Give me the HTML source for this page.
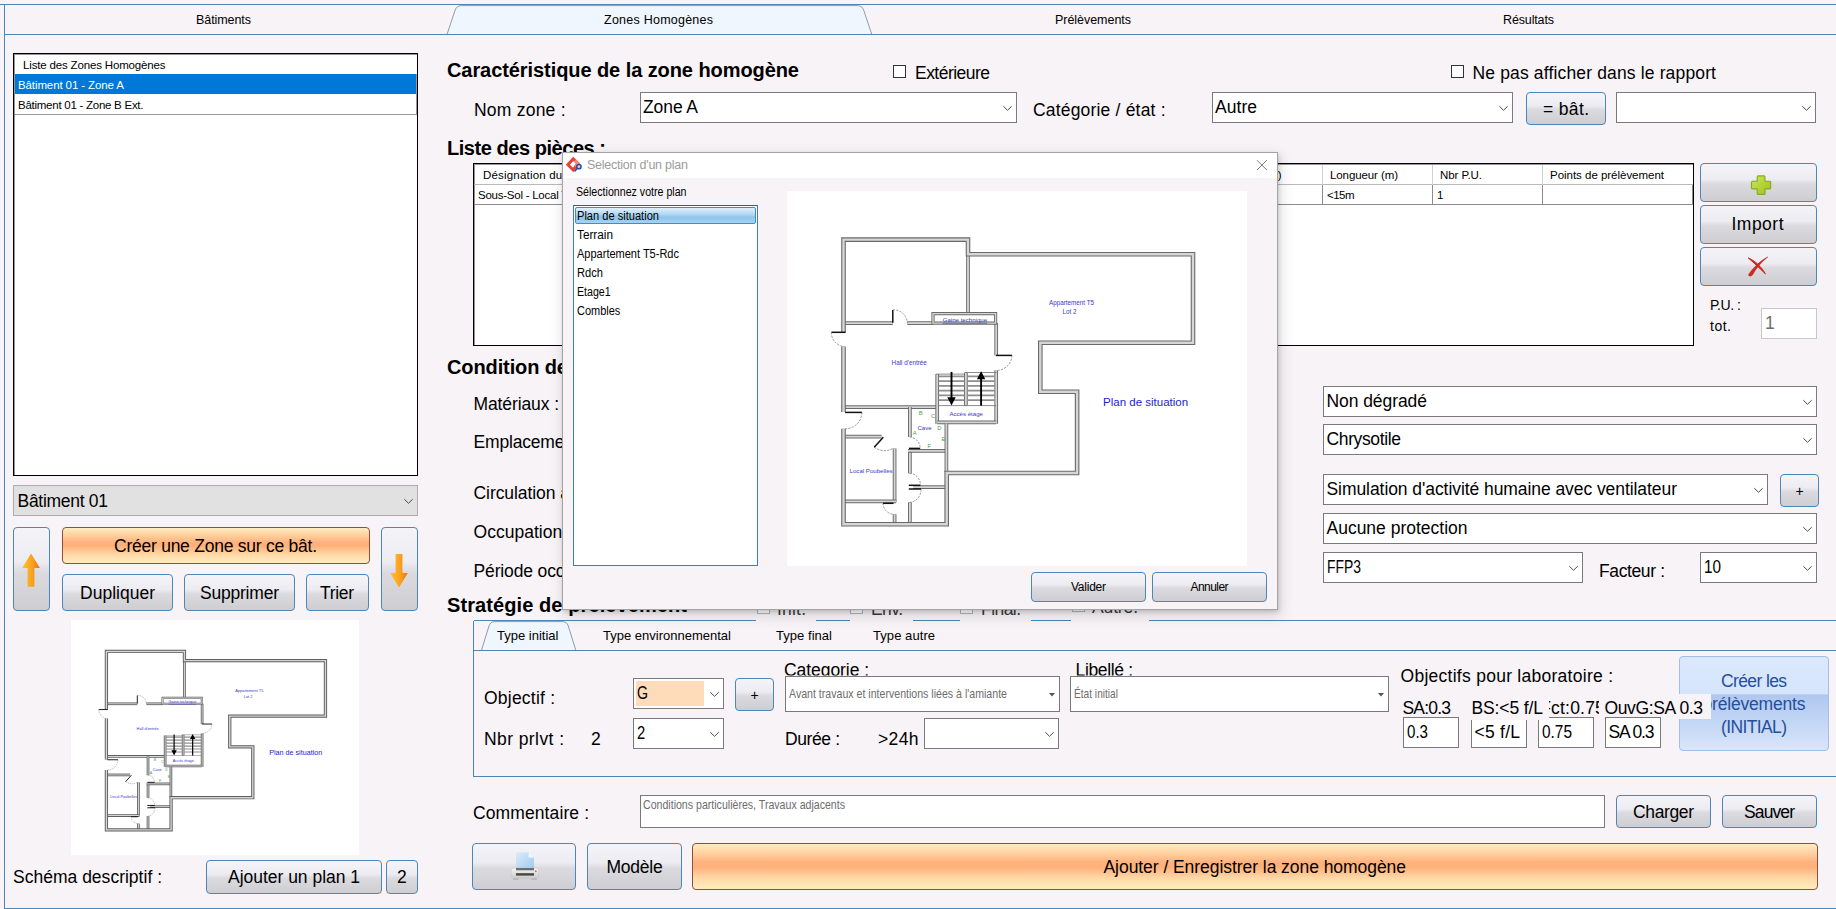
<!DOCTYPE html>
<html lang="fr"><head><meta charset="utf-8"><title>Zones Homogènes</title>
<style>
html,body{margin:0;padding:0}
body{width:1836px;height:909px;overflow:hidden;position:relative;background:#f7f3f7;font-family:"Liberation Sans",sans-serif;color:#000}
div,span,svg.abs{position:absolute;box-sizing:border-box}
.t{white-space:pre;display:block}
svg text{font-family:"Liberation Sans",sans-serif}
.btn{border:1px solid #4d86b8;border-radius:4px;background:linear-gradient(#f4f3f8 0%,#edecf2 41%,#dbdadf 54%,#cecdd2 100%)}
.obtn{border:1px solid #8a5238;border-radius:4px;background:linear-gradient(#ffecc4 0%,#ffd2a0 19%,#ffb27e 41%,#ffb07a 51%,#ffd8a6 76%,#ffedc0 100%)}
.combo{border:1px solid #7a7a7a;background:#fff}
.chev{position:absolute;right:3px;top:50%;margin-top:-3px}
.line{background:#4a86b8}
.cb{border:1px solid #333;background:#fff}
</style></head><body>

<div class="line" style="left:0px;top:4px;width:1836px;height:1px;"></div>
<div class="line" style="left:4px;top:4px;width:1px;height:905px;"></div>
<div class="line" style="left:4px;top:908px;width:1832px;height:1px;"></div>
<svg class="abs" style="left:440px;top:0" width="440" height="36" viewBox="440 0 440 36"><path d="M447 34.5 L455 10.5 Q456.6 5.6 461.5 5.6 H857.3 Q862.2 5.6 863.8 10.5 L871.8 34.5 Z" fill="#eff6fd" stroke="#74849a" stroke-width=".8"/></svg>
<div class="line" style="left:4px;top:34px;width:1832px;height:1px;"></div>
<span class="t" style="left:196.0px;top:13px;font-size:12.5px;line-height:14px;letter-spacing:-0.073px;">Bâtiments</span>
<span class="t" style="left:604.0px;top:13px;font-size:12.5px;line-height:14px;letter-spacing:0.242px;">Zones Homogènes</span>
<span class="t" style="left:1055.0px;top:13px;font-size:12.5px;line-height:14px;letter-spacing:-0.039px;">Prélèvements</span>
<span class="t" style="left:1503.0px;top:13px;font-size:12.5px;line-height:14px;letter-spacing:-0.138px;">Résultats</span>
<div class="" style="left:13px;top:53px;width:405px;height:423px;border:1px solid #000;background:#fff;box-shadow:inset 1px 1px 0 rgba(0,0,0,.42)"></div>
<div class="" style="left:15px;top:74px;width:401px;height:20px;background:#0078d7"></div>
<div class="" style="left:15px;top:114px;width:402px;height:1px;background:#999"></div>
<div class="" style="left:416px;top:74px;width:1px;height:41px;background:#999"></div>
<span class="t" style="left:23.0px;top:59px;font-size:11.5px;line-height:12px;letter-spacing:-0.162px;">Liste des Zones Homogènes</span>
<span class="t" style="left:18.0px;top:79px;font-size:11.5px;line-height:12px;letter-spacing:-0.107px;color:#fff;">Bâtiment 01 - Zone A</span>
<span class="t" style="left:18.0px;top:99px;font-size:11.5px;line-height:12px;letter-spacing:-0.257px;">Bâtiment 01 - Zone B Ext.</span>
<div class="combo" style="left:13px;top:485px;width:405px;height:31px;background:#e1e1e1;border-color:#adadad"><svg class="chev" width="11" height="7" viewBox="0 0 11 7"><path d="M1.3 1.2 L5.5 5.3 L9.7 1.2" fill="none" stroke="#4a4a4a" stroke-width="1"/></svg></div>
<span class="t" style="left:17.5px;top:491px;font-size:17.5px;line-height:20px;letter-spacing:-0.289px;">Bâtiment 01</span>
<div class="btn" style="left:13px;top:527px;width:37px;height:84px;"></div>
<div class="btn" style="left:381px;top:527px;width:37px;height:84px;"></div>
<svg class="abs" style="left:19.5px;top:551px" width="22" height="38" viewBox="0 0 22 38"><defs><linearGradient id="ag1" x1="0" y1="0" x2="1" y2="0"><stop offset="0" stop-color="#ffc32c"/><stop offset=".62" stop-color="#f99d1c"/><stop offset="1" stop-color="#ea6a1a"/></linearGradient></defs><path d="M11 2.6 L19.8 17 H14.4 V35.8 H7.6 V17 H2.2 Z" fill="url(#ag1)"/></svg>
<svg class="abs" style="left:387.6px;top:551px" width="22" height="38" viewBox="0 0 22 38"><defs><linearGradient id="ag2" x1="0" y1="0" x2="1" y2="0"><stop offset="0" stop-color="#ffc32c"/><stop offset=".62" stop-color="#f99d1c"/><stop offset="1" stop-color="#ea6a1a"/></linearGradient></defs><path d="M11 36.4 L19.8 22 H14.4 V3 H7.6 V22 H2.2 Z" fill="url(#ag2)"/></svg>
<div class="obtn" style="left:62px;top:527px;width:308px;height:37px;"></div>
<span class="t" style="left:114.0px;top:536px;font-size:17.5px;line-height:20px;letter-spacing:-0.246px;">Créer une Zone sur ce bât.</span>
<div class="btn" style="left:62px;top:574px;width:111px;height:37px;"></div>
<span class="t" style="left:80.0px;top:583px;font-size:17.5px;line-height:20px;letter-spacing:0.011px;">Dupliquer</span>
<div class="btn" style="left:184px;top:574px;width:111px;height:37px;"></div>
<span class="t" style="left:200.0px;top:583px;font-size:17.5px;line-height:20px;letter-spacing:-0.216px;">Supprimer</span>
<div class="btn" style="left:306px;top:574px;width:63px;height:37px;"></div>
<span class="t" style="left:320.0px;top:583px;font-size:17.5px;line-height:20px;letter-spacing:-0.330px;">Trier</span>
<div style="left:71px;top:620px;width:287.7px;height:234.5px;overflow:hidden;background:#fff">
<svg class="abs" style="left:0.15px;top:0.9px;background:#fff" width="288.3" height="234.6" viewBox="0 0 460 374" preserveAspectRatio="xMinYMin meet"><rect x="0" y="0" width="460" height="374" fill="#fff"/><path d="M181 48.6 V122" fill="none" stroke="#5e5e5e" stroke-width="4.3" stroke-linejoin="miter"/><path d="M181 48.6 V122" fill="none" stroke="#d6d6d6" stroke-width="1.6" stroke-linejoin="miter"/><path d="M56.5 132.1 H105.8" fill="none" stroke="#5e5e5e" stroke-width="4.3" stroke-linejoin="miter"/><path d="M56.5 132.1 H105.8" fill="none" stroke="#d6d6d6" stroke-width="1.6" stroke-linejoin="miter"/><path d="M120.3 132.1 H146" fill="none" stroke="#5e5e5e" stroke-width="4.3" stroke-linejoin="miter"/><path d="M120.3 132.1 H146" fill="none" stroke="#d6d6d6" stroke-width="1.6" stroke-linejoin="miter"/><path d="M209.2 132 V164.4" fill="none" stroke="#5e5e5e" stroke-width="4.3" stroke-linejoin="miter"/><path d="M209.2 132 V164.4" fill="none" stroke="#d6d6d6" stroke-width="1.6" stroke-linejoin="miter"/><path d="M209.2 179.4 V232.8" fill="none" stroke="#5e5e5e" stroke-width="4.3" stroke-linejoin="miter"/><path d="M209.2 179.4 V232.8" fill="none" stroke="#d6d6d6" stroke-width="1.6" stroke-linejoin="miter"/><path d="M56.5 216.1 H150.5" fill="none" stroke="#5e5e5e" stroke-width="4.3" stroke-linejoin="miter"/><path d="M56.5 216.1 H150.5" fill="none" stroke="#d6d6d6" stroke-width="1.6" stroke-linejoin="miter"/><path d="M150.2 183 V232.8" fill="none" stroke="#5e5e5e" stroke-width="4.3" stroke-linejoin="miter"/><path d="M150.2 183 V232.8" fill="none" stroke="#d6d6d6" stroke-width="1.6" stroke-linejoin="miter"/><path d="M150.2 231.4 H209.2" fill="none" stroke="#5e5e5e" stroke-width="4.3" stroke-linejoin="miter"/><path d="M150.2 231.4 H209.2" fill="none" stroke="#d6d6d6" stroke-width="1.6" stroke-linejoin="miter"/><path d="M178.9 181.5 V214.6" fill="none" stroke="#5e5e5e" stroke-width="4.3" stroke-linejoin="miter"/><path d="M178.9 181.5 V214.6" fill="none" stroke="#d6d6d6" stroke-width="1.6" stroke-linejoin="miter"/><path d="M122.9 216 V246" fill="none" stroke="#5e5e5e" stroke-width="4.3" stroke-linejoin="miter"/><path d="M122.9 216 V246" fill="none" stroke="#d6d6d6" stroke-width="1.6" stroke-linejoin="miter"/><path d="M122.9 258.5 V282.3" fill="none" stroke="#5e5e5e" stroke-width="4.3" stroke-linejoin="miter"/><path d="M122.9 258.5 V282.3" fill="none" stroke="#d6d6d6" stroke-width="1.6" stroke-linejoin="miter"/><path d="M122.9 311.4 V333" fill="none" stroke="#5e5e5e" stroke-width="4.3" stroke-linejoin="miter"/><path d="M122.9 311.4 V333" fill="none" stroke="#d6d6d6" stroke-width="1.6" stroke-linejoin="miter"/><path d="M121 259.9 H159.5" fill="none" stroke="#5e5e5e" stroke-width="4.3" stroke-linejoin="miter"/><path d="M121 259.9 H159.5" fill="none" stroke="#d6d6d6" stroke-width="1.6" stroke-linejoin="miter"/><path d="M126 296.2 H159.5" fill="none" stroke="#5e5e5e" stroke-width="4.3" stroke-linejoin="miter"/><path d="M126 296.2 H159.5" fill="none" stroke="#d6d6d6" stroke-width="1.6" stroke-linejoin="miter"/><path d="M159.4 232.5 V281" fill="none" stroke="#5e5e5e" stroke-width="4.3" stroke-linejoin="miter"/><path d="M159.4 232.5 V281" fill="none" stroke="#d6d6d6" stroke-width="1.6" stroke-linejoin="miter"/><path d="M56.5 245.6 H94.5" fill="none" stroke="#5e5e5e" stroke-width="4.3" stroke-linejoin="miter"/><path d="M56.5 245.6 H94.5" fill="none" stroke="#d6d6d6" stroke-width="1.6" stroke-linejoin="miter"/><path d="M107.6 257.5 V311 " fill="none" stroke="#5e5e5e" stroke-width="4.3" stroke-linejoin="miter"/><path d="M107.6 257.5 V311 " fill="none" stroke="#d6d6d6" stroke-width="1.6" stroke-linejoin="miter"/><path d="M56.5 310.4 H109.2" fill="none" stroke="#5e5e5e" stroke-width="4.3" stroke-linejoin="miter"/><path d="M56.5 310.4 H109.2" fill="none" stroke="#d6d6d6" stroke-width="1.6" stroke-linejoin="miter"/><path d="M107.6 323.2 V333" fill="none" stroke="#5e5e5e" stroke-width="4.3" stroke-linejoin="miter"/><path d="M107.6 323.2 V333" fill="none" stroke="#d6d6d6" stroke-width="1.6" stroke-linejoin="miter"/><path d="M146 122.6 H208.6 V132.1 H146 Z" fill="none" stroke="#5e5e5e" stroke-width="3.2" stroke-linejoin="miter"/><path d="M146 122.6 H208.6 V132.1 H146 Z" fill="none" stroke="#d6d6d6" stroke-width="1.4" stroke-linejoin="miter"/><path d="M151.8 185.30 H177.4 M180.4 185.30 H208" stroke="#8e8e8e" stroke-width="1.7"/><path d="M151.8 190.07 H177.4 M180.4 190.07 H208" stroke="#8e8e8e" stroke-width="1.7"/><path d="M151.8 194.84 H177.4 M180.4 194.84 H208" stroke="#8e8e8e" stroke-width="1.7"/><path d="M151.8 199.61 H177.4 M180.4 199.61 H208" stroke="#8e8e8e" stroke-width="1.7"/><path d="M151.8 204.38 H177.4 M180.4 204.38 H208" stroke="#8e8e8e" stroke-width="1.7"/><path d="M151.8 209.15 H177.4 M180.4 209.15 H208" stroke="#8e8e8e" stroke-width="1.7"/><path d="M149 183.1 H178 M178 181.5 H209.6 M151 214.6 H209" stroke="#6e6e6e" stroke-width=".8" fill="none"/><path d="M56.5 141.3 V48.6 H181 V63.3 H406 V151.8 H253.3 V200.8 H290.1 V282 H159.7 V333.3 H56.5 V237.8 M56.5 221.1 V155.4" fill="none" stroke="#5e5e5e" stroke-width="5.2" stroke-linejoin="miter"/><path d="M56.5 141.3 V48.6 H181 V63.3 H406 V151.8 H253.3 V200.8 H290.1 V282 H159.7 V333.3 H56.5 V237.8 M56.5 221.1 V155.4" fill="none" stroke="#d6d6d6" stroke-width="2.2" stroke-linejoin="miter"/><path d="M44.4 141.3 H58.6" stroke="#111" stroke-width="1.5" fill="none"/><path d="M58.1 221.4 H74.9" stroke="#111" stroke-width="1.5" fill="none"/><path d="M105.8 118.9 V131.7" stroke="#111" stroke-width="1.5" fill="none"/><path d="M209 164.4 H225" stroke="#111" stroke-width="1.5" fill="none"/><path d="M122 257.4 H133.2" stroke="#111" stroke-width="1.5" fill="none"/><path d="M121.8 294.3 H133.4" stroke="#111" stroke-width="1.5" fill="none"/><path d="M121.8 298 H134" stroke="#111" stroke-width="1.5" fill="none"/><path d="M96.3 246.2 L87.2 256.3" stroke="#111" stroke-width="1.5" fill="none"/><path d="M96 312.3 H106.5" stroke="#111" stroke-width="1.5" fill="none"/><path d="M44.4 141.3 A14 14 0 0 0 56 155.4" stroke="#555" stroke-width="0.6" stroke-dasharray="2.2 1.2" fill="none"/><path d="M74.9 221.4 A16.6 16.6 0 0 1 58.1 237.8" stroke="#555" stroke-width="0.6" stroke-dasharray="2.2 1.2" fill="none"/><path d="M105.8 118.9 A13.5 13.5 0 0 1 120.3 131.7" stroke="#555" stroke-width="0.6" stroke-dasharray="2.2 1.2" fill="none"/><path d="M225 164.4 A15.5 15.5 0 0 1 209.5 179.4" stroke="#555" stroke-width="0.6" stroke-dasharray="2.2 1.2" fill="none"/><path d="M122.6 246 A11.3 11.3 0 0 1 133.2 257.2" stroke="#555" stroke-width="0.6" stroke-dasharray="2.2 1.2" fill="none"/><path d="M122.6 282.3 A11.4 11.4 0 0 1 133.4 293.8" stroke="#555" stroke-width="0.6" stroke-dasharray="2.2 1.2" fill="none"/><path d="M134 298.4 A12.6 12.6 0 0 1 122.6 311.4" stroke="#555" stroke-width="0.6" stroke-dasharray="2.2 1.2" fill="none"/><path d="M87.2 256.3 Q96.9 262.5 106.5 257.2" stroke="#555" stroke-width="0.6" stroke-dasharray="2.2 1.2" fill="none"/><path d="M96 312.3 A11 11 0 0 0 106.5 323.2" stroke="#555" stroke-width="0.6" stroke-dasharray="2.2 1.2" fill="none"/><path d="M164.5 180.9 V208" stroke="#000" stroke-width="1.9"/><path d="M160.3 206.2 H168.7 L164.5 214.6 Z" fill="#000"/><path d="M194.1 214.6 V187" stroke="#000" stroke-width="1.9"/><path d="M189.9 188.2 H198.3 L194.1 180.3 Z" fill="#000"/><text x="284.5" y="113.6" font-size="6.3" fill="#3a3ac8" text-anchor="middle" >Appartement T5</text><text x="282.6" y="122.8" font-size="6.3" fill="#3a3ac8" text-anchor="middle" >Lot 2</text><text x="177.9" y="130.9" font-size="6.1" fill="#3a3ac8" text-anchor="middle" text-decoration="underline">Gaine technique</text><text x="122.2" y="173.6" font-size="6.3" fill="#3a3ac8" text-anchor="middle" >Hall d'entrée</text><text x="179.2" y="225.3" font-size="6.1" fill="#3a3ac8" text-anchor="middle" >Accès étage</text><text x="137.6" y="239.3" font-size="6.1" fill="#3a3ac8" text-anchor="middle" >Cave</text><text x="84.1" y="282.1" font-size="6.1" fill="#3a3ac8" text-anchor="middle" >Local Poubelles</text><text x="358.6" y="214.6" font-size="11.5" fill="#2323d2" text-anchor="middle" >Plan de situation</text><text x="133.8" y="223.8" font-size="5.8" fill="#4aa34a" text-anchor="middle" >B</text><text x="146.1" y="226.7" font-size="5.8" fill="#4aa34a" text-anchor="middle" >C</text><text x="152.3" y="238.8" font-size="5.8" fill="#4aa34a" text-anchor="middle" >D</text><text x="156.4" y="249.8" font-size="5.8" fill="#4aa34a" text-anchor="middle" >E</text><text x="127.7" y="243.8" font-size="5.8" fill="#4aa34a" text-anchor="middle" >A</text><text x="142.2" y="257.1" font-size="5.8" fill="#4aa34a" text-anchor="middle" >F</text></svg>
</div>
<span class="t" style="left:13.0px;top:867px;font-size:17.5px;line-height:20px;letter-spacing:0.010px;">Schéma descriptif :</span>
<div class="btn" style="left:206px;top:860px;width:176px;height:34px;"></div>
<span class="t" style="left:228.0px;top:867px;font-size:17.5px;line-height:20px;letter-spacing:-0.020px;">Ajouter un plan 1</span>
<div class="btn" style="left:386px;top:860px;width:32px;height:34px;"></div>
<span class="t" style="left:397.1px;top:867px;font-size:17.5px;line-height:20px;">2</span>
<span class="t" style="left:447.0px;top:59px;font-size:20px;line-height:22px;letter-spacing:-0.075px;font-weight:700;">Caractéristique de la zone homogène</span>
<div class="cb" style="left:893px;top:65px;width:13px;height:13px;"></div>
<span class="t" style="left:915.0px;top:63px;font-size:17.5px;line-height:20px;letter-spacing:-0.529px;">Extérieure</span>
<div class="cb" style="left:1451px;top:65px;width:13px;height:13px;"></div>
<span class="t" style="left:1472.5px;top:63px;font-size:17.5px;line-height:20px;letter-spacing:0.150px;">Ne pas afficher dans le rapport</span>
<span class="t" style="left:474.0px;top:100px;font-size:17.5px;line-height:20px;letter-spacing:0.224px;">Nom zone :</span>
<div class="combo" style="left:640px;top:92px;width:377px;height:31px;"><svg class="chev" width="11" height="7" viewBox="0 0 11 7"><path d="M1.3 1.2 L5.5 5.3 L9.7 1.2" fill="none" stroke="#4a4a4a" stroke-width="1"/></svg></div>
<span class="t" style="left:643.0px;top:97px;font-size:17.5px;line-height:20px;letter-spacing:-0.092px;">Zone A</span>
<span class="t" style="left:1033.0px;top:100px;font-size:17.5px;line-height:20px;letter-spacing:0.184px;">Catégorie / état :</span>
<div class="combo" style="left:1212px;top:92px;width:301px;height:31px;"><svg class="chev" width="11" height="7" viewBox="0 0 11 7"><path d="M1.3 1.2 L5.5 5.3 L9.7 1.2" fill="none" stroke="#4a4a4a" stroke-width="1"/></svg></div>
<span class="t" style="left:1215.0px;top:97px;font-size:17.5px;line-height:20px;letter-spacing:0.043px;">Autre</span>
<div class="btn" style="left:1526px;top:92px;width:80px;height:33px;"></div>
<span class="t" style="left:1543.0px;top:99px;font-size:17.5px;line-height:20px;letter-spacing:0.346px;">= bât.</span>
<div class="combo" style="left:1616px;top:92px;width:200px;height:31px;"><svg class="chev" width="11" height="7" viewBox="0 0 11 7"><path d="M1.3 1.2 L5.5 5.3 L9.7 1.2" fill="none" stroke="#4a4a4a" stroke-width="1"/></svg></div>
<span class="t" style="left:447.0px;top:137px;font-size:20px;line-height:22px;letter-spacing:-0.455px;font-weight:700;">Liste des pièces :</span>
<div class="" style="left:473px;top:163px;width:1221px;height:183px;border:1px solid #000;background:#fff;box-shadow:inset 1px 1px 0 rgba(0,0,0,.42)"></div>
<div class="" style="left:474px;top:184px;width:1219px;height:1px;background:#b9b9b9"></div>
<div class="" style="left:474px;top:204px;width:1219px;height:1px;background:#8c8c8c"></div>
<div class="" style="left:1322px;top:165px;width:1px;height:20px;background:#d0d0d0"></div>
<div class="" style="left:1322px;top:185px;width:1px;height:20px;background:#8c8c8c"></div>
<div class="" style="left:1432px;top:165px;width:1px;height:20px;background:#d0d0d0"></div>
<div class="" style="left:1432px;top:185px;width:1px;height:20px;background:#8c8c8c"></div>
<div class="" style="left:1542px;top:165px;width:1px;height:20px;background:#d0d0d0"></div>
<div class="" style="left:1542px;top:185px;width:1px;height:20px;background:#8c8c8c"></div>
<div class="" style="left:1692px;top:185px;width:1px;height:20px;background:#8c8c8c"></div>
<span class="t" style="left:483.0px;top:169px;font-size:11.5px;line-height:12px;letter-spacing:0.191px;">Désignation du local</span>
<span class="t" style="left:478.0px;top:189px;font-size:11.5px;line-height:12px;letter-spacing:-0.245px;">Sous-Sol - Local Technique</span>
<span class="t" style="left:1226.0px;top:169px;font-size:11.5px;line-height:12px;letter-spacing:-0.457px;">Largeur (m)</span>
<span class="t" style="left:1330.0px;top:169px;font-size:11.5px;line-height:12px;letter-spacing:-0.094px;">Longueur (m)</span>
<span class="t" style="left:1440.0px;top:169px;font-size:11.5px;line-height:12px;letter-spacing:-0.087px;">Nbr P.U.</span>
<span class="t" style="left:1550.0px;top:169px;font-size:11.5px;line-height:12px;letter-spacing:-0.022px;">Points de prélèvement</span>
<span class="t" style="left:1327.0px;top:189px;font-size:11.5px;line-height:12px;letter-spacing:-0.529px;">&lt;15m</span>
<span class="t" style="left:1437.0px;top:189px;font-size:11.5px;line-height:12px;">1</span>
<div class="btn" style="left:1700px;top:163px;width:117px;height:39px;"></div>
<svg class="abs" style="left:1748px;top:172px" width="26" height="26" viewBox="1748 172 26 26"><defs><linearGradient id="pg" x1="0" y1="0" x2="1" y2="1"><stop offset="0" stop-color="#cfe565"/><stop offset=".55" stop-color="#b2d235"/><stop offset="1" stop-color="#9cc024"/></linearGradient></defs><path d="M1758.2 175.9 H1764 Q1765 175.9 1765 176.9 V181.3 H1769.7 Q1770.7 181.3 1770.7 182.3 V187.9 Q1770.7 188.9 1769.7 188.9 H1765 V193.4 Q1765 194.4 1764 194.4 H1758.2 Q1757.2 194.4 1757.2 193.4 V188.9 H1752.5 Q1751.5 188.9 1751.5 187.9 V182.3 Q1751.5 181.3 1752.5 181.3 H1757.2 V176.9 Q1757.2 175.9 1758.2 175.9 Z" fill="url(#pg)" stroke="#86aa22" stroke-width="1.1"/></svg>
<div class="btn" style="left:1700px;top:205px;width:117px;height:39px;"></div>
<span class="t" style="left:1731.5px;top:214px;font-size:17.5px;line-height:20px;letter-spacing:0.481px;">Import</span>
<div class="btn" style="left:1700px;top:247px;width:117px;height:39px;"></div>
<svg class="abs" style="left:1744px;top:253px" width="28" height="26" viewBox="1744 253 28 26"><path d="M1767.7 257 C1760.5 260.6 1753.2 267.8 1748.7 274.4 C1748.2 276.4 1751 276.6 1752.6 274.8 C1755.8 268.6 1761.2 262 1767.7 257 Z" fill="#d8261c" stroke="#a3150d" stroke-width=".5"/><path d="M1748.2 257.9 C1754.8 260.6 1761.4 266.6 1765.4 273.9 C1760.4 268.8 1754.8 263.6 1748.2 257.9 Z" fill="#d8261c" stroke="#c5231a" stroke-width=".9" stroke-linejoin="round"/></svg>
<span class="t" style="left:1710.0px;top:297px;font-size:14px;line-height:16px;letter-spacing:-0.440px;">P.U. :</span>
<span class="t" style="left:1710.0px;top:318px;font-size:14px;line-height:16px;letter-spacing:0.515px;">tot.</span>
<div class="" style="left:1761px;top:308px;width:56px;height:31px;border:1px solid #c8c8c8;background:#fff"></div>
<span class="t" style="left:1765.0px;top:313px;font-size:17.5px;line-height:20px;color:#6d6d6d;">1</span>
<span class="t" style="left:447.0px;top:356px;font-size:20px;line-height:22px;letter-spacing:-0.113px;font-weight:700;">Condition de prélèvement</span>
<span class="t" style="left:473.5px;top:394px;font-size:17.5px;line-height:20px;letter-spacing:-0.106px;">Matériaux :</span>
<span class="t" style="left:473.5px;top:432px;font-size:17.5px;line-height:20px;letter-spacing:-0.185px;">Emplacement :</span>
<span class="t" style="left:473.5px;top:483px;font-size:17.5px;line-height:20px;letter-spacing:-0.068px;">Circulation air :</span>
<span class="t" style="left:473.5px;top:522px;font-size:17.5px;line-height:20px;letter-spacing:0.023px;">Occupation :</span>
<span class="t" style="left:473.5px;top:561px;font-size:17.5px;line-height:20px;letter-spacing:-0.137px;">Période occ :</span>
<div class="combo" style="left:1323px;top:386px;width:494px;height:31px;"><svg class="chev" width="11" height="7" viewBox="0 0 11 7"><path d="M1.3 1.2 L5.5 5.3 L9.7 1.2" fill="none" stroke="#4a4a4a" stroke-width="1"/></svg></div>
<span class="t" style="left:1326.5px;top:391px;font-size:17.5px;line-height:20px;letter-spacing:-0.069px;">Non dégradé</span>
<div class="combo" style="left:1323px;top:424px;width:494px;height:31px;"><svg class="chev" width="11" height="7" viewBox="0 0 11 7"><path d="M1.3 1.2 L5.5 5.3 L9.7 1.2" fill="none" stroke="#4a4a4a" stroke-width="1"/></svg></div>
<span class="t" style="left:1326.5px;top:429px;font-size:17.5px;line-height:20px;letter-spacing:-0.367px;">Chrysotile</span>
<div class="combo" style="left:1323px;top:474px;width:445px;height:31px;"><svg class="chev" width="11" height="7" viewBox="0 0 11 7"><path d="M1.3 1.2 L5.5 5.3 L9.7 1.2" fill="none" stroke="#4a4a4a" stroke-width="1"/></svg></div>
<span class="t" style="left:1326.5px;top:479px;font-size:17.5px;line-height:20px;letter-spacing:-0.068px;">Simulation d'activité humaine avec ventilateur</span>
<div class="btn" style="left:1780px;top:474px;width:39px;height:33px;"></div>
<span class="t" style="left:1795.4px;top:483px;font-size:14px;line-height:16px;">+</span>
<div class="combo" style="left:1323px;top:513px;width:494px;height:31px;"><svg class="chev" width="11" height="7" viewBox="0 0 11 7"><path d="M1.3 1.2 L5.5 5.3 L9.7 1.2" fill="none" stroke="#4a4a4a" stroke-width="1"/></svg></div>
<span class="t" style="left:1326.5px;top:518px;font-size:17.5px;line-height:20px;letter-spacing:-0.004px;">Aucune protection</span>
<div class="combo" style="left:1323px;top:552px;width:260px;height:31px;"><svg class="chev" width="11" height="7" viewBox="0 0 11 7"><path d="M1.3 1.2 L5.5 5.3 L9.7 1.2" fill="none" stroke="#4a4a4a" stroke-width="1"/></svg></div>
<span class="t" style="left:1326.5px;top:557px;font-size:17.5px;line-height:20px;transform:scaleX(0.7946);transform-origin:0 0;">FFP3</span>
<span class="t" style="left:1599.0px;top:561px;font-size:17.5px;line-height:20px;letter-spacing:-0.382px;">Facteur :</span>
<div class="combo" style="left:1700px;top:552px;width:117px;height:31px;"><svg class="chev" width="11" height="7" viewBox="0 0 11 7"><path d="M1.3 1.2 L5.5 5.3 L9.7 1.2" fill="none" stroke="#4a4a4a" stroke-width="1"/></svg></div>
<span class="t" style="left:1704.0px;top:557px;font-size:17.5px;line-height:20px;transform:scaleX(0.8733);transform-origin:0 0;">10</span>
<span class="t" style="left:447.0px;top:594px;font-size:20px;line-height:22px;letter-spacing:0.092px;font-weight:700;">Stratégie de prélèvement</span>
<div class="cb" style="left:757px;top:601px;width:13px;height:13px;border-color:#b4b4b4"></div>
<span class="t" style="left:777.0px;top:599px;font-size:17.5px;line-height:20px;letter-spacing:0.198px;color:#3a3a3a;">Init.</span>
<div class="cb" style="left:850px;top:601px;width:13px;height:13px;border-color:#b4b4b4"></div>
<span class="t" style="left:871.0px;top:599px;font-size:17.5px;line-height:20px;letter-spacing:-0.573px;color:#3a3a3a;">Env.</span>
<div class="cb" style="left:960px;top:601px;width:13px;height:13px;border-color:#b4b4b4"></div>
<span class="t" style="left:981.0px;top:599px;font-size:17.5px;line-height:20px;letter-spacing:-0.559px;color:#3a3a3a;">Final.</span>
<div class="cb" style="left:1072px;top:599px;width:13px;height:13px;border-color:#b4b4b4"></div>
<span class="t" style="left:1092.0px;top:597px;font-size:17.5px;line-height:20px;letter-spacing:-0.138px;color:#3a3a3a;">Autre.</span>
<div class="line" style="left:474px;top:620px;width:282px;height:1px;"></div>
<div class="line" style="left:816px;top:620px;width:34px;height:1px;"></div>
<div class="line" style="left:913px;top:620px;width:47px;height:1px;"></div>
<div class="line" style="left:1031px;top:620px;width:40px;height:1px;"></div>
<div class="line" style="left:1149px;top:620px;width:687px;height:1px;"></div>
<div class="line" style="left:473px;top:621px;width:1px;height:156px;"></div>
<svg class="abs" style="left:474px;top:618px" width="110" height="35" viewBox="474 618 110 35"><path d="M481.4 650.5 L489 626 Q490.4 621.6 495 621.6 H562.3 Q566.9 621.6 568.3 626 L575.9 650.5 Z" fill="#eff6fd" stroke="#74849a" stroke-width=".8"/></svg>
<div class="line" style="left:473px;top:650px;width:1363px;height:1px;"></div>
<div class="line" style="left:473px;top:776px;width:1363px;height:1px;"></div>
<span class="t" style="left:497.0px;top:628px;font-size:13px;line-height:15px;letter-spacing:0.007px;">Type initial</span>
<span class="t" style="left:603.0px;top:628px;font-size:13px;line-height:15px;letter-spacing:0.004px;">Type environnemental</span>
<span class="t" style="left:776.0px;top:628px;font-size:13px;line-height:15px;letter-spacing:0.039px;">Type final</span>
<span class="t" style="left:873.0px;top:628px;font-size:13px;line-height:15px;letter-spacing:0.064px;">Type autre</span>
<span class="t" style="left:484.0px;top:688px;font-size:17.5px;line-height:20px;letter-spacing:0.217px;">Objectif :</span>
<span class="t" style="left:484.0px;top:729px;font-size:17.5px;line-height:20px;letter-spacing:0.415px;">Nbr prlvt :</span>
<span class="t" style="left:591.0px;top:729px;font-size:17.5px;line-height:20px;">2</span>
<div class="combo" style="left:633px;top:678px;width:91px;height:31px;"><svg class="chev" width="11" height="7" viewBox="0 0 11 7"><path d="M1.3 1.2 L5.5 5.3 L9.7 1.2" fill="none" stroke="#4a4a4a" stroke-width="1"/></svg></div>
<div class="" style="left:636px;top:681px;width:68px;height:25px;background:#ffdcb9"></div>
<span class="t" style="left:636.6px;top:683px;font-size:17.5px;line-height:20px;transform:scaleX(0.8081);transform-origin:0 0;">G</span>
<div class="btn" style="left:735px;top:678px;width:39px;height:33px;"></div>
<span class="t" style="left:750.4px;top:687px;font-size:14px;line-height:16px;">+</span>
<div class="combo" style="left:633px;top:718px;width:91px;height:31px;"><svg class="chev" width="11" height="7" viewBox="0 0 11 7"><path d="M1.3 1.2 L5.5 5.3 L9.7 1.2" fill="none" stroke="#4a4a4a" stroke-width="1"/></svg></div>
<span class="t" style="left:636.6px;top:723px;font-size:17.5px;line-height:20px;transform:scaleX(0.8425);transform-origin:0 0;">2</span>
<div class="" style="left:784px;top:655px;width:116px;height:22px;overflow:hidden"></div>
<span class="t" style="left:784.0px;top:660px;font-size:17.5px;line-height:20px;letter-spacing:-0.061px;clip-path:inset(0 0 4.5px 0);">Categorie :</span>
<span class="t" style="left:1075.5px;top:660px;font-size:17.5px;line-height:20px;letter-spacing:-0.353px;clip-path:inset(0 0 4.5px 0);">Libellé :</span>
<div class="combo" style="left:785px;top:676px;width:275px;height:36px;"><svg class="chev" style="right:4px;margin-top:-1px" width="6" height="4" viewBox="0 0 6 4"><path d="M0 0 H6 L3 3.6 Z" fill="#555"/></svg></div>
<span class="t" style="left:789.0px;top:686px;font-size:13px;line-height:15px;transform:scaleX(0.8151);transform-origin:0 0;color:#6d6d6d;">Avant travaux et interventions liées à l'amiante</span>
<div class="combo" style="left:1070px;top:676px;width:319px;height:36px;"><svg class="chev" style="right:4px;margin-top:-1px" width="6" height="4" viewBox="0 0 6 4"><path d="M0 0 H6 L3 3.6 Z" fill="#555"/></svg></div>
<span class="t" style="left:1074.0px;top:686px;font-size:13px;line-height:15px;transform:scaleX(0.7807);transform-origin:0 0;color:#6d6d6d;">État initial</span>
<span class="t" style="left:785.0px;top:729px;font-size:17.5px;line-height:20px;letter-spacing:-0.398px;">Durée :</span>
<span class="t" style="left:878.0px;top:729px;font-size:17.5px;line-height:20px;letter-spacing:0.360px;">&gt;24h</span>
<div class="combo" style="left:924px;top:718px;width:135px;height:31px;"><svg class="chev" width="11" height="7" viewBox="0 0 11 7"><path d="M1.3 1.2 L5.5 5.3 L9.7 1.2" fill="none" stroke="#4a4a4a" stroke-width="1"/></svg></div>
<span class="t" style="left:1400.5px;top:666px;font-size:17.5px;line-height:20px;letter-spacing:0.269px;">Objectifs pour laboratoire :</span>
<div class="" style="left:1679px;top:656px;width:150px;height:95px;border:1px solid #9fbee9;border-radius:4px;background:linear-gradient(#dbe8fd 0%,#d6e5fc 40%,#afc7ef 40.5%,#c3d6f5 70%,#d9e5fb 100%)"></div>
<span class="t" style="left:1721.0px;top:671px;font-size:17.5px;line-height:20px;letter-spacing:-0.624px;color:#244f9b;">Créer les</span>
<span class="t" style="left:1702.5px;top:694px;font-size:17.5px;line-height:20px;letter-spacing:-0.187px;color:#244f9b;">prélèvements</span>
<span class="t" style="left:1721.0px;top:717px;font-size:17.5px;line-height:20px;letter-spacing:-0.622px;color:#244f9b;">(INITIAL)</span>
<div class="" style="left:1604px;top:694px;width:107px;height:25px;background:#f7f3f7"></div>
<div class="combo" style="left:1403px;top:717px;width:56px;height:31px;"></div>
<span class="t" style="left:1406.5px;top:722px;font-size:17.5px;line-height:20px;transform:scaleX(0.8632);transform-origin:0 0;">0.3</span>
<div class="combo" style="left:1471px;top:717px;width:56px;height:31px;"></div>
<span class="t" style="left:1474.5px;top:722px;font-size:17.5px;line-height:20px;letter-spacing:0.246px;">&lt;5 f/L</span>
<div class="combo" style="left:1538px;top:717px;width:56px;height:31px;"></div>
<span class="t" style="left:1541.5px;top:722px;font-size:17.5px;line-height:20px;transform:scaleX(0.8808);transform-origin:0 0;">0.75</span>
<div class="combo" style="left:1605px;top:717px;width:56px;height:31px;"></div>
<span class="t" style="left:1608.5px;top:722px;font-size:17.5px;line-height:20px;letter-spacing:-1.114px;">SA 0.3</span>
<div class="" style="left:1469px;top:695px;width:80px;height:25px;background:#f7f3f7"></div>
<span class="t" style="left:1402.5px;top:698px;font-size:17.5px;line-height:20px;letter-spacing:-0.807px;">SA:0.3</span>
<span class="t" style="left:1471.5px;top:698px;font-size:17.5px;line-height:20px;letter-spacing:-0.122px;">BS:&lt;5 f/L</span>
<div style="left:1549px;top:695px;width:50.4px;height:22px;overflow:hidden;background:#f7f3f7">
<span class="t" style="left:-8.8px;top:3px;font-size:17.5px;line-height:20px;letter-spacing:0.200px;">Fct:0.75</span>
</div>
<span class="t" style="left:1604.5px;top:698px;font-size:17.5px;line-height:20px;letter-spacing:-0.364px;">OuvG:SA 0.3</span>
<span class="t" style="left:473.0px;top:803px;font-size:17.5px;line-height:20px;letter-spacing:0.103px;">Commentaire :</span>
<div class="combo" style="left:640px;top:795px;width:965px;height:33px;"></div>
<span class="t" style="left:643.0px;top:797px;font-size:13px;line-height:15px;transform:scaleX(0.8150);transform-origin:0 0;color:#6d6d6d;">Conditions particulières, Travaux adjacents</span>
<div class="btn" style="left:1616px;top:795px;width:95px;height:33px;"></div>
<span class="t" style="left:1633.0px;top:802px;font-size:17.5px;line-height:20px;letter-spacing:-0.371px;">Charger</span>
<div class="btn" style="left:1722px;top:795px;width:95px;height:33px;"></div>
<span class="t" style="left:1744.0px;top:802px;font-size:17.5px;line-height:20px;letter-spacing:-0.890px;">Sauver</span>
<div class="btn" style="left:472px;top:843px;width:104px;height:47px;"></div>
<svg class="abs" style="left:508px;top:849px" width="34" height="34" viewBox="508 849 34 34"><defs><linearGradient id="pp" x1="0" y1="0" x2="1" y2="1"><stop offset="0" stop-color="#dcecfa"/><stop offset="1" stop-color="#9fcaee"/></linearGradient><linearGradient id="pb" x1="0" y1="0" x2="0" y2="1"><stop offset="0" stop-color="#f6f6f6"/><stop offset="1" stop-color="#c9c9c9"/></linearGradient></defs><path d="M516 852.2 H528.6 L534 857.6 V869 H516 Z" fill="url(#pp)"/><path d="M528.6 852.2 V857.6 H534 Z" fill="#f2f8fe"/><rect x="511.2" y="868" width="27.4" height="10.6" rx="2.6" fill="url(#pb)" stroke="#c2c2c2" stroke-width=".5"/><rect x="516" y="868" width="18" height="2.3" fill="#6e6e6e"/><rect x="516" y="873.2" width="18" height="2.4" fill="#454545"/><circle cx="535.8" cy="871.3" r=".95" fill="#f0624d"/><rect x="513" y="878.6" width="5.5" height="1" fill="#a8a8a8"/><rect x="531.3" y="878.6" width="5.5" height="1" fill="#a8a8a8"/></svg>
<div class="btn" style="left:587px;top:843px;width:95px;height:47px;"></div>
<span class="t" style="left:606.4px;top:857px;font-size:17.5px;line-height:20px;letter-spacing:-0.220px;">Modèle</span>
<div class="obtn" style="left:692px;top:843px;width:1126px;height:47px;"></div>
<span class="t" style="left:1103.5px;top:857px;font-size:17.5px;line-height:20px;letter-spacing:-0.054px;">Ajouter / Enregistrer la zone homogène</span>
<div style="left:562px;top:152px;width:716px;height:458px;background:#f7f3f7;border:1px solid #a3a3a3;box-shadow:1px 2px 4px rgba(0,0,0,.14),2px 5px 13px 1px rgba(0,0,0,.13)">
<div style="left:0;top:0;width:714px;height:25px;background:#fff"></div>
</div>
<svg class="abs" style="left:564px;top:155px" width="18" height="18" viewBox="564 155 18 18"><path d="M573.2 158.9 L577.9 163.4 L573.2 170 L567.9 164.7 Z" fill="none" stroke="#e8413c" stroke-width="3" stroke-linejoin="miter"/><path d="M574.9 160.4 L577.9 163.4 L575.6 166.6" fill="none" stroke="#f28a78" stroke-width="2.8"/><path d="M577.2 168.2 L575 171" stroke="#1f4fa8" stroke-width="1.4" stroke-linecap="round"/><circle cx="578.9" cy="166.7" r="2.1" fill="#f7c9b8" stroke="#1f4fa8" stroke-width="1.5"/></svg>
<span class="t" style="left:587.0px;top:158px;font-size:12.5px;line-height:14px;letter-spacing:-0.236px;color:#9b9b9b;">Selection d'un plan</span>
<svg class="abs" style="left:1255px;top:158px" width="14" height="14" viewBox="0 0 14 14"><path d="M2 2.2 L11.8 12 M11.8 2.2 L2 12" stroke="#6a6a6a" stroke-width=".9"/></svg>
<span class="t" style="left:576.0px;top:185px;font-size:12px;line-height:14px;transform:scaleX(0.8858);transform-origin:0 0;">Sélectionnez votre plan</span>
<div class="" style="left:573px;top:205px;width:185px;height:361px;border:1px solid #3c7fb1;border-top-color:#3a5f86;background:#fff"></div>
<div class="" style="left:575px;top:207px;width:181px;height:17px;border:1px solid #3b8ed4;border-radius:2px;background:linear-gradient(#e1f0fb 0%,#b4d9f3 40%,#8dc5ec 62%,#a6d3f3 100%)"></div>
<span class="t" style="left:577.0px;top:209px;font-size:12px;line-height:14px;transform:scaleX(0.9241);transform-origin:0 0;">Plan de situation</span>
<span class="t" style="left:577.0px;top:228px;font-size:12px;line-height:14px;transform:scaleX(0.9814);transform-origin:0 0;">Terrain</span>
<span class="t" style="left:577.0px;top:247px;font-size:12px;line-height:14px;transform:scaleX(0.9175);transform-origin:0 0;">Appartement T5-Rdc</span>
<span class="t" style="left:577.0px;top:266px;font-size:12px;line-height:14px;transform:scaleX(0.9281);transform-origin:0 0;">Rdch</span>
<span class="t" style="left:577.0px;top:285px;font-size:12px;line-height:14px;transform:scaleX(0.8834);transform-origin:0 0;">Etage1</span>
<span class="t" style="left:577.0px;top:304px;font-size:12px;line-height:14px;transform:scaleX(0.9144);transform-origin:0 0;">Combles</span>
<svg class="abs" style="left:787px;top:191px;background:#fff" width="460" height="375" viewBox="0 0 460 374" preserveAspectRatio="xMinYMin meet"><rect x="0" y="0" width="460" height="374" fill="#fff"/><path d="M181 48.6 V122" fill="none" stroke="#6a6a6a" stroke-width="3.7" stroke-linejoin="miter"/><path d="M181 48.6 V122" fill="none" stroke="#d6d6d6" stroke-width="1.8" stroke-linejoin="miter"/><path d="M56.5 132.1 H105.8" fill="none" stroke="#6a6a6a" stroke-width="3.7" stroke-linejoin="miter"/><path d="M56.5 132.1 H105.8" fill="none" stroke="#d6d6d6" stroke-width="1.8" stroke-linejoin="miter"/><path d="M120.3 132.1 H146" fill="none" stroke="#6a6a6a" stroke-width="3.7" stroke-linejoin="miter"/><path d="M120.3 132.1 H146" fill="none" stroke="#d6d6d6" stroke-width="1.8" stroke-linejoin="miter"/><path d="M209.2 132 V164.4" fill="none" stroke="#6a6a6a" stroke-width="3.7" stroke-linejoin="miter"/><path d="M209.2 132 V164.4" fill="none" stroke="#d6d6d6" stroke-width="1.8" stroke-linejoin="miter"/><path d="M209.2 179.4 V232.8" fill="none" stroke="#6a6a6a" stroke-width="3.7" stroke-linejoin="miter"/><path d="M209.2 179.4 V232.8" fill="none" stroke="#d6d6d6" stroke-width="1.8" stroke-linejoin="miter"/><path d="M56.5 216.1 H150.5" fill="none" stroke="#6a6a6a" stroke-width="3.7" stroke-linejoin="miter"/><path d="M56.5 216.1 H150.5" fill="none" stroke="#d6d6d6" stroke-width="1.8" stroke-linejoin="miter"/><path d="M150.2 183 V232.8" fill="none" stroke="#6a6a6a" stroke-width="3.7" stroke-linejoin="miter"/><path d="M150.2 183 V232.8" fill="none" stroke="#d6d6d6" stroke-width="1.8" stroke-linejoin="miter"/><path d="M150.2 231.4 H209.2" fill="none" stroke="#6a6a6a" stroke-width="3.7" stroke-linejoin="miter"/><path d="M150.2 231.4 H209.2" fill="none" stroke="#d6d6d6" stroke-width="1.8" stroke-linejoin="miter"/><path d="M178.9 181.5 V214.6" fill="none" stroke="#6a6a6a" stroke-width="3.7" stroke-linejoin="miter"/><path d="M178.9 181.5 V214.6" fill="none" stroke="#d6d6d6" stroke-width="1.8" stroke-linejoin="miter"/><path d="M122.9 216 V246" fill="none" stroke="#6a6a6a" stroke-width="3.7" stroke-linejoin="miter"/><path d="M122.9 216 V246" fill="none" stroke="#d6d6d6" stroke-width="1.8" stroke-linejoin="miter"/><path d="M122.9 258.5 V282.3" fill="none" stroke="#6a6a6a" stroke-width="3.7" stroke-linejoin="miter"/><path d="M122.9 258.5 V282.3" fill="none" stroke="#d6d6d6" stroke-width="1.8" stroke-linejoin="miter"/><path d="M122.9 311.4 V333" fill="none" stroke="#6a6a6a" stroke-width="3.7" stroke-linejoin="miter"/><path d="M122.9 311.4 V333" fill="none" stroke="#d6d6d6" stroke-width="1.8" stroke-linejoin="miter"/><path d="M121 259.9 H159.5" fill="none" stroke="#6a6a6a" stroke-width="3.7" stroke-linejoin="miter"/><path d="M121 259.9 H159.5" fill="none" stroke="#d6d6d6" stroke-width="1.8" stroke-linejoin="miter"/><path d="M126 296.2 H159.5" fill="none" stroke="#6a6a6a" stroke-width="3.7" stroke-linejoin="miter"/><path d="M126 296.2 H159.5" fill="none" stroke="#d6d6d6" stroke-width="1.8" stroke-linejoin="miter"/><path d="M159.4 232.5 V281" fill="none" stroke="#6a6a6a" stroke-width="3.7" stroke-linejoin="miter"/><path d="M159.4 232.5 V281" fill="none" stroke="#d6d6d6" stroke-width="1.8" stroke-linejoin="miter"/><path d="M56.5 245.6 H94.5" fill="none" stroke="#6a6a6a" stroke-width="3.7" stroke-linejoin="miter"/><path d="M56.5 245.6 H94.5" fill="none" stroke="#d6d6d6" stroke-width="1.8" stroke-linejoin="miter"/><path d="M107.6 257.5 V311 " fill="none" stroke="#6a6a6a" stroke-width="3.7" stroke-linejoin="miter"/><path d="M107.6 257.5 V311 " fill="none" stroke="#d6d6d6" stroke-width="1.8" stroke-linejoin="miter"/><path d="M56.5 310.4 H109.2" fill="none" stroke="#6a6a6a" stroke-width="3.7" stroke-linejoin="miter"/><path d="M56.5 310.4 H109.2" fill="none" stroke="#d6d6d6" stroke-width="1.8" stroke-linejoin="miter"/><path d="M107.6 323.2 V333" fill="none" stroke="#6a6a6a" stroke-width="3.7" stroke-linejoin="miter"/><path d="M107.6 323.2 V333" fill="none" stroke="#d6d6d6" stroke-width="1.8" stroke-linejoin="miter"/><path d="M146 122.6 H208.6 V132.1 H146 Z" fill="none" stroke="#6a6a6a" stroke-width="3.2" stroke-linejoin="miter"/><path d="M146 122.6 H208.6 V132.1 H146 Z" fill="none" stroke="#d6d6d6" stroke-width="1.4" stroke-linejoin="miter"/><path d="M151.8 185.30 H177.4 M180.4 185.30 H208" stroke="#8e8e8e" stroke-width="1.7"/><path d="M151.8 190.07 H177.4 M180.4 190.07 H208" stroke="#8e8e8e" stroke-width="1.7"/><path d="M151.8 194.84 H177.4 M180.4 194.84 H208" stroke="#8e8e8e" stroke-width="1.7"/><path d="M151.8 199.61 H177.4 M180.4 199.61 H208" stroke="#8e8e8e" stroke-width="1.7"/><path d="M151.8 204.38 H177.4 M180.4 204.38 H208" stroke="#8e8e8e" stroke-width="1.7"/><path d="M151.8 209.15 H177.4 M180.4 209.15 H208" stroke="#8e8e8e" stroke-width="1.7"/><path d="M149 183.1 H178 M178 181.5 H209.6 M151 214.6 H209" stroke="#6e6e6e" stroke-width=".8" fill="none"/><path d="M56.5 141.3 V48.6 H181 V63.3 H406 V151.8 H253.3 V200.8 H290.1 V282 H159.7 V333.3 H56.5 V237.8 M56.5 221.1 V155.4" fill="none" stroke="#6a6a6a" stroke-width="4.6" stroke-linejoin="miter"/><path d="M56.5 141.3 V48.6 H181 V63.3 H406 V151.8 H253.3 V200.8 H290.1 V282 H159.7 V333.3 H56.5 V237.8 M56.5 221.1 V155.4" fill="none" stroke="#d6d6d6" stroke-width="2.4" stroke-linejoin="miter"/><path d="M44.4 141.3 H58.6" stroke="#111" stroke-width="1.5" fill="none"/><path d="M58.1 221.4 H74.9" stroke="#111" stroke-width="1.5" fill="none"/><path d="M105.8 118.9 V131.7" stroke="#111" stroke-width="1.5" fill="none"/><path d="M209 164.4 H225" stroke="#111" stroke-width="1.5" fill="none"/><path d="M122 257.4 H133.2" stroke="#111" stroke-width="1.5" fill="none"/><path d="M121.8 294.3 H133.4" stroke="#111" stroke-width="1.5" fill="none"/><path d="M121.8 298 H134" stroke="#111" stroke-width="1.5" fill="none"/><path d="M96.3 246.2 L87.2 256.3" stroke="#111" stroke-width="1.5" fill="none"/><path d="M96 312.3 H106.5" stroke="#111" stroke-width="1.5" fill="none"/><path d="M44.4 141.3 A14 14 0 0 0 56 155.4" stroke="#555" stroke-width="0.6" stroke-dasharray="2.2 1.2" fill="none"/><path d="M74.9 221.4 A16.6 16.6 0 0 1 58.1 237.8" stroke="#555" stroke-width="0.6" stroke-dasharray="2.2 1.2" fill="none"/><path d="M105.8 118.9 A13.5 13.5 0 0 1 120.3 131.7" stroke="#555" stroke-width="0.6" stroke-dasharray="2.2 1.2" fill="none"/><path d="M225 164.4 A15.5 15.5 0 0 1 209.5 179.4" stroke="#555" stroke-width="0.6" stroke-dasharray="2.2 1.2" fill="none"/><path d="M122.6 246 A11.3 11.3 0 0 1 133.2 257.2" stroke="#555" stroke-width="0.6" stroke-dasharray="2.2 1.2" fill="none"/><path d="M122.6 282.3 A11.4 11.4 0 0 1 133.4 293.8" stroke="#555" stroke-width="0.6" stroke-dasharray="2.2 1.2" fill="none"/><path d="M134 298.4 A12.6 12.6 0 0 1 122.6 311.4" stroke="#555" stroke-width="0.6" stroke-dasharray="2.2 1.2" fill="none"/><path d="M87.2 256.3 Q96.9 262.5 106.5 257.2" stroke="#555" stroke-width="0.6" stroke-dasharray="2.2 1.2" fill="none"/><path d="M96 312.3 A11 11 0 0 0 106.5 323.2" stroke="#555" stroke-width="0.6" stroke-dasharray="2.2 1.2" fill="none"/><path d="M164.5 180.9 V208" stroke="#000" stroke-width="1.9"/><path d="M160.3 206.2 H168.7 L164.5 214.6 Z" fill="#000"/><path d="M194.1 214.6 V187" stroke="#000" stroke-width="1.9"/><path d="M189.9 188.2 H198.3 L194.1 180.3 Z" fill="#000"/><text x="284.5" y="113.6" font-size="6.3" fill="#3a3ac8" text-anchor="middle" >Appartement T5</text><text x="282.6" y="122.8" font-size="6.3" fill="#3a3ac8" text-anchor="middle" >Lot 2</text><text x="177.9" y="130.9" font-size="6.1" fill="#3a3ac8" text-anchor="middle" text-decoration="underline">Gaine technique</text><text x="122.2" y="173.6" font-size="6.3" fill="#3a3ac8" text-anchor="middle" >Hall d'entrée</text><text x="179.2" y="225.3" font-size="6.1" fill="#3a3ac8" text-anchor="middle" >Accès étage</text><text x="137.6" y="239.3" font-size="6.1" fill="#3a3ac8" text-anchor="middle" >Cave</text><text x="84.1" y="282.1" font-size="6.1" fill="#3a3ac8" text-anchor="middle" >Local Poubelles</text><text x="358.6" y="214.6" font-size="11.5" fill="#2323d2" text-anchor="middle" >Plan de situation</text><text x="133.8" y="223.8" font-size="5.8" fill="#4aa34a" text-anchor="middle" >B</text><text x="146.1" y="226.7" font-size="5.8" fill="#4aa34a" text-anchor="middle" >C</text><text x="152.3" y="238.8" font-size="5.8" fill="#4aa34a" text-anchor="middle" >D</text><text x="156.4" y="249.8" font-size="5.8" fill="#4aa34a" text-anchor="middle" >E</text><text x="127.7" y="243.8" font-size="5.8" fill="#4aa34a" text-anchor="middle" >A</text><text x="142.2" y="257.1" font-size="5.8" fill="#4aa34a" text-anchor="middle" >F</text></svg>
<div class="btn" style="left:1031px;top:572px;width:115px;height:30px;"></div>
<span class="t" style="left:1071.0px;top:580px;font-size:12px;line-height:14px;letter-spacing:-0.244px;">Valider</span>
<div class="btn" style="left:1152px;top:572px;width:115px;height:30px;"></div>
<span class="t" style="left:1190.5px;top:580px;font-size:12px;line-height:14px;letter-spacing:-0.561px;">Annuler</span>
</body></html>
